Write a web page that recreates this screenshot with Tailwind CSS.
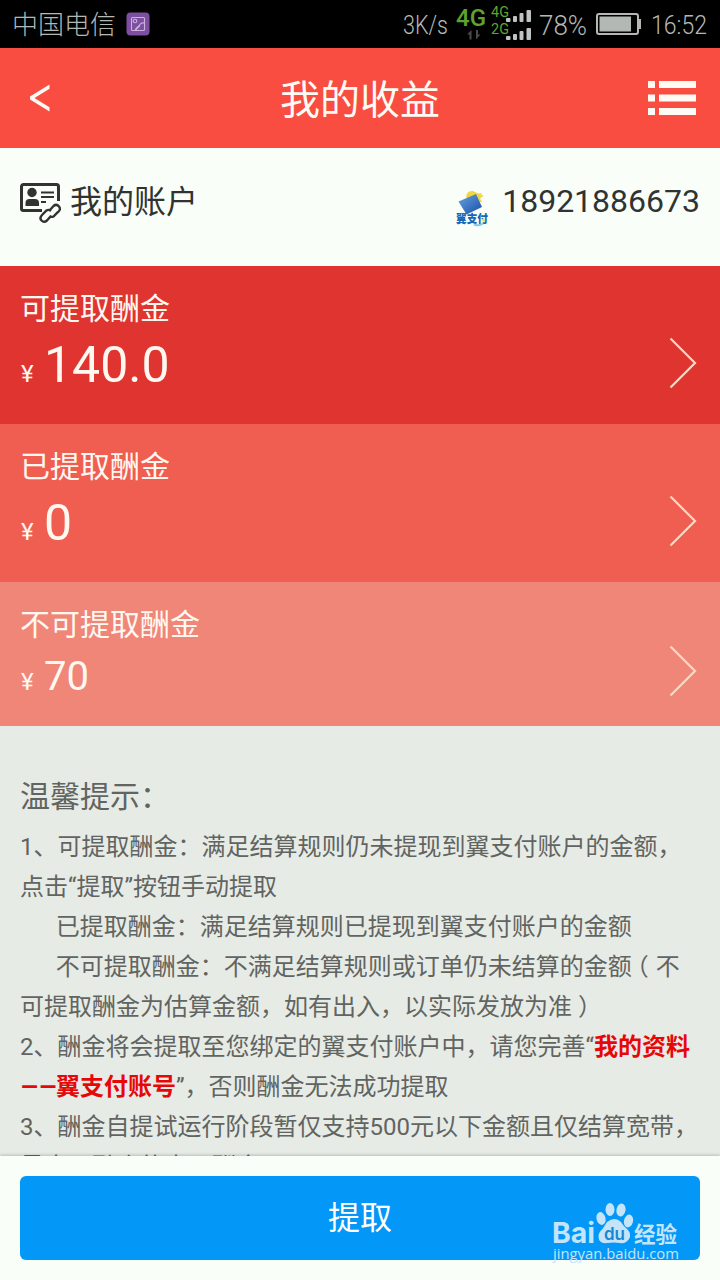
<!DOCTYPE html>
<html lang="zh-CN">
<head>
<meta charset="utf-8">
<title>我的收益</title>
<script src="https://cdn.jsdelivr.net/npm/@tailwindcss/browser@4"></script>
</head>
<body class="w-[720px] h-[1280px] overflow-hidden flex flex-col bg-[#f9fef9] font-['Roboto','Noto_Sans_CJK_SC',sans-serif] whitespace-nowrap">
<div class="h-12 shrink-0 bg-black text-[#b4b8b4] flex items-center pl-3 pr-3">
  <span class="text-[26px] leading-12 pt-[2px] font-light">中国电信</span>
  <svg class="ml-[10px]" width="24" height="24" viewBox="0 0 24 24"><rect x=".5" y=".5" width="23" height="23" rx="4" fill="#7c4fa0"/><g fill="none" stroke="#cdb2dd" stroke-width="1.1"><rect x="5.500" y="5.500" width="13" height="13" rx="1"/><circle cx="9" cy="9" r="1.800"/><path d="M9 18.500C10.500 14 12.500 15.500 14 12.500C15 10.500 17 10.800 18.500 11M9 18.500l5-5"/></g></svg>
  <svg class="ml-auto" width="307" height="48" viewBox="401 0 307 48" font-family="Roboto">
    <g fill="#b4b8b4" font-size="26"><text x="403" y="34" textLength="45" lengthAdjust="spacingAndGlyphs" font-weight="300">3K/s</text><text x="539" y="35" font-size="27" textLength="48" lengthAdjust="spacingAndGlyphs" font-weight="300">78%</text><text x="651" y="34" textLength="56" lengthAdjust="spacingAndGlyphs" font-weight="300">16:52</text></g>
    <g fill="#5ea32f"><text x="456" y="26" font-size="24" font-weight="500" textLength="30" lengthAdjust="spacingAndGlyphs">4G</text><text x="491" y="17" font-size="14" textLength="18" lengthAdjust="spacingAndGlyphs">4G</text><text x="491" y="34" font-size="14" textLength="18" lengthAdjust="spacingAndGlyphs">2G</text></g>
    <path d="M467 34.500l4.500-4.500v9.500h-2v-5zM480.500 34.500l-4.500 5v-9.500h2v4.500z" fill="#4a4a4a"/>
    <g fill="#c0c3c0"><rect x="506" y="18" width="4.500" height="4" rx="1"/><rect x="513" y="16" width="4" height="6" rx="1"/><rect x="519.500" y="13" width="4" height="9" rx="1"/><rect x="526.500" y="10" width="4.500" height="12" rx="1"/><rect x="506" y="36" width="4.500" height="4" rx="1"/><rect x="513" y="34" width="4" height="6" rx="1"/><rect x="519.500" y="31" width="4" height="9" rx="1"/><rect x="526.500" y="28" width="4.500" height="12" rx="1"/></g>
    <rect x="597" y="14" width="41" height="20" rx="2" fill="none" stroke="#b4b8b4" stroke-width="2"/><rect x="599.500" y="16.500" width="31.500" height="15" fill="#b4b8b4"/><rect x="638.500" y="19" width="2.500" height="10" fill="#b4b8b4"/>
  </svg>
</div>
<div class="h-[100px] shrink-0 bg-[#f84d40] text-[#fffaf4] grid grid-cols-[1fr_auto_1fr] items-center pl-[24px] pr-6">
  <svg class="ml-[5px]" width="22" height="30" viewBox="0 0 22 30"><path d="M20.500 1.500v4.200L5.500 15l15 9.300v4.200L1 16.500v-3z" fill="currentColor"/></svg>
  <h1 class="text-[40px] leading-[60px] text-center pt-[6px]">我的收益</h1>
  <svg class="justify-self-end" width="48" height="34" viewBox="0 0 48 34" fill="currentColor"><path d="M0 0h7v7H0zM11 0h37v7H11zM0 13.500h7v7H0zM11 13.500h37v7H11zM0 27h7v7H0zM11 27h37v7H11z"/></svg>
</div>
<div class="h-[118px] shrink-0 flex items-start pt-[30px] pl-5 pr-5 text-[32px] leading-[46px] text-[#303330]">
  <svg class="mt-[5px]" width="42" height="42" viewBox="0 0 42 42" fill="none" stroke="#303330"><path d="M22 27.500H3.500a2 2 0 0 1-2-2V3.500a2 2 0 0 1 2-2h33a2 2 0 0 1 2 2V18" stroke-width="3"/><circle cx="12" cy="9.500" r="4.700" fill="#303330" stroke="none"/><path d="M5.500 23v-3q0-4 4-4h5.500q4 0 4 4v3z" fill="#303330" stroke="none"/><path d="M21 9.500h13M21 14h13M21 19h5" stroke-width="2"/><path d="M29.500 27.500l4-4.500q3-2.500 5.500.5t-1.500 6l-4 4q-2 1-4-.500M30.500 33.500l-3.500 4q-3 2.500-5.500 0t1-6l4-4q2-1.500 4.500.5" stroke-width="2.400"/></svg>
  <span class="ml-[8px] pt-px">我的账户</span>
  <svg class="ml-auto mt-[8px]" width="36" height="42" viewBox="-2 -1 36 42">
    <defs><linearGradient id="bag" x1="0" y1="0" x2="1" y2="1"><stop stop-color="#69a3df"/><stop offset="1" stop-color="#174fa7"/></linearGradient></defs>
    <path d="M10 10Q11 3 17 4l5 2.500 4-.5-1 2 3 .5-4 3 2 3-8 4z" fill="#f3d53d"/><path d="M2.500 14.500L20 7l6 13-15.500 7.500z" fill="url(#bag)"/>
    <text x="0" y="35.500" font-family="Noto Sans CJK SC" font-weight="900" font-size="11.500" fill="#1767b4" textLength="32" lengthAdjust="spacingAndGlyphs">翼支付</text><path d="M18 37.500q5 2 9-1" fill="none" stroke="#8cc9e8" stroke-width="2"/><circle cx="27.500" cy="33" r="1.600" fill="#dfe25a"/>
  </svg>
  <span class="ml-3">18921886673</span>
</div>
<div class="h-[158px] shrink-0 bg-[#e03430] text-[#fff8f0] flex justify-between pl-5 pr-[23px]">
  <div class="pt-[21px]"><div class="text-[30px] leading-[44px]">可提取酬金</div><div class="leading-[60px] mt-[4px]"><span class="inline-block text-2xl leading-[60px] w-[14px] translate-x-px">¥</span><span class="text-[50px] leading-[60px] ml-[10px]">140.0</span></div></div>
  <svg class="mt-[71px]" width="28" height="52" viewBox="0 0 28 52"><path d="M1.500 1.500L26 26 1.500 50.500" fill="none" stroke="#fcd9c4" stroke-width="2.200"/></svg>
</div>
<div class="h-[158px] shrink-0 bg-[#f05e51] text-[#fff8f0] flex justify-between pl-5 pr-[23px]">
  <div class="pt-[21px]"><div class="text-[30px] leading-[44px]">已提取酬金</div><div class="leading-[60px] mt-[4px]"><span class="inline-block text-2xl leading-[60px] w-[14px] translate-x-px">¥</span><span class="text-[50px] leading-[60px] ml-[10px]">0</span></div></div>
  <svg class="mt-[71px]" width="28" height="52" viewBox="0 0 28 52"><path d="M1.500 1.500L26 26 1.500 50.500" fill="none" stroke="#fcd9c4" stroke-width="2.200"/></svg>
</div>
<div class="h-[144px] shrink-0 bg-[#ef8678] text-[#fff8f0] flex justify-between pl-5 pr-[23px]">
  <div class="pt-[21px]"><div class="text-[30px] leading-[44px]">不可提取酬金</div><div class="leading-[48px] mt-[6px]"><span class="inline-block text-2xl leading-[48px] w-[14px] translate-x-px">¥</span><span class="text-[40px] leading-[48px] ml-[10px]">70</span></div></div>
  <svg class="mt-[63px]" width="28" height="52" viewBox="0 0 28 52"><path d="M1.500 1.500L26 26 1.500 50.500" fill="none" stroke="#fcd9c4" stroke-width="2.200"/></svg>
</div>
<div class="h-[430px] shrink-0 overflow-hidden bg-[#e7ebe6] text-[#616460] pl-5 pt-[47px] text-2xl leading-10">
  <div class="text-[30px] leading-[48px] mb-[6px]">温馨提示：</div>
  <div class="h-10 leading-10">1、可提取酬金：满足结算规则仍未提现到翼支付账户的金额，</div>
  <div class="h-10 leading-10">点击“提取”按钮手动提取</div>
  <div class="h-10 leading-10">&nbsp;&nbsp;&nbsp;&nbsp;&nbsp;&nbsp;已提取酬金：满足结算规则已提现到翼支付账户的金额</div>
  <div class="h-10 leading-10">&nbsp;&nbsp;&nbsp;&nbsp;&nbsp;&nbsp;不可提取酬金：不满足结算规则或订单仍未结算的金额<span class="inline-block -translate-x-[7px]">（</span>不</div>
  <div class="h-10 leading-10">可提取酬金为估算金额，如有出入，以实际发放为准<span class="inline-block translate-x-[6px]">）</span></div>
  <div class="h-10 leading-10">2、酬金将会提取至您绑定的翼支付账户中，请您完善“<b class="text-[#e60808]">我的资料</b></div>
  <div class="h-10 leading-10 flex"><b class="text-[#e60808] flex"><span class="inline-block w-[36px]"><span class="inline-block origin-left scale-x-[1.22]">––</span></span>翼支付账号</b>”，否则酬金无法成功提取</div>
  <div class="h-10 leading-10">3、酬金自提试运行阶段暂仅支持500元以下金额且仅结算宽带，</div>
  <div class="h-10 leading-10">最大、融合的本月酬金</div>
</div>
<div class="h-[124px] shrink-0 px-5 pt-5 shadow-[0_-1px_3px_rgba(0,0,0,0.2)] bg-[#f9fef9] z-10">
  <div class="relative h-[84px] rounded-md bg-[#0398f8] text-white text-[32px] leading-[84px] text-center">提取
    <svg class="absolute left-[530px] top-[24px]" width="132" height="66" viewBox="0 0 132 66" fill="#c5e4fa">
      <text x="2" y="43" font-family="Inter" font-weight="700" font-size="29" textLength="43" lengthAdjust="spacingAndGlyphs">Bai</text>
      <ellipse cx="51" cy="18.500" rx="4.500" ry="6.500" transform="rotate(-15 51 18.500)"/><ellipse cx="60" cy="9.500" rx="4.500" ry="6.500"/><ellipse cx="71" cy="10" rx="4.500" ry="6.500" transform="rotate(12 71 10)"/><ellipse cx="78.500" cy="21" rx="4.500" ry="6.500" transform="rotate(15 78.500 21)"/>
      <path d="M57 22q8-6 14 0 3 5 6 7 5 5 2 10-3 5-9 4-6-1-13 0-8 1-8.500-6 0-5 4-8z"/>
      <text x="54" y="39.500" font-family="Inter" font-weight="600" font-size="17" fill="#1687d5" textLength="21" lengthAdjust="spacingAndGlyphs">du</text>
      <text x="84" y="42" font-family="Noto Sans CJK SC" font-weight="700" font-size="22" textLength="43" lengthAdjust="spacingAndGlyphs">经验</text>
      <text x="3" y="59" font-family="Open Sans" font-weight="500" font-size="14.500" textLength="126" lengthAdjust="spacingAndGlyphs">jingyan.baidu.com</text>
    </svg>
  </div>
</div>
</body>
</html>
